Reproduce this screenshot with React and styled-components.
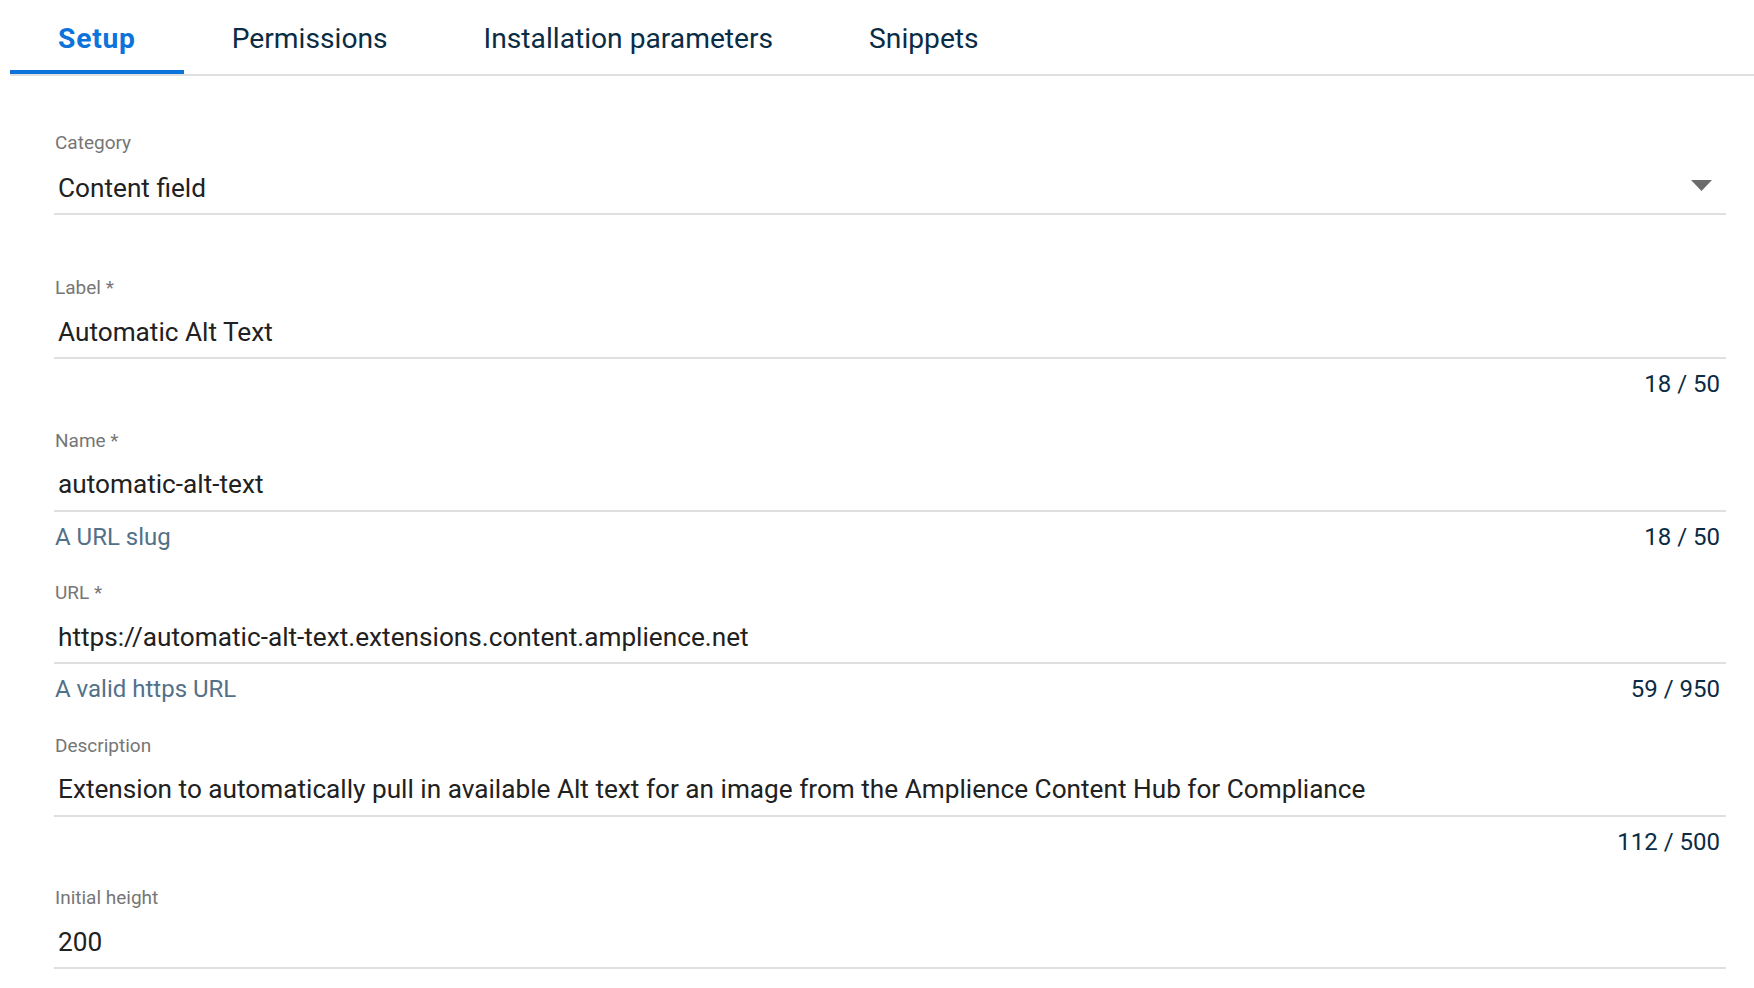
import React from 'react';
import styled, { createGlobalStyle } from 'styled-components';

const GlobalStyle = createGlobalStyle`
  html, body {
    margin: 0;
    padding: 0;
    background: #ffffff;
  }
  body {
    font-family: Roboto, 'Liberation Sans', sans-serif;
    -webkit-font-smoothing: antialiased;
  }
`;

const tabs = ['Setup', 'Permissions', 'Installation parameters', 'Snippets'];

const fields = [
  { label: 'Label *', value: 'Automatic Alt Text', count: '18 / 50' },
  { label: 'Name *', value: 'automatic-alt-text', hint: 'A URL slug', count: '18 / 50' },
  {
    label: 'URL *',
    value: 'https://automatic-alt-text.extensions.content.amplience.net',
    hint: 'A valid https URL',
    count: '59 / 950',
  },
  {
    label: 'Description',
    value:
      'Extension to automatically pull in available Alt text for an image from the Amplience Content Hub for Compliance',
    count: '112 / 500',
  },
  { label: 'Initial height', value: '200', last: true },
];

export default function App() {
  return (
    <Page>
      <GlobalStyle />
      <TabBar>
        {tabs.map((t, i) => (
          <Tab key={t} $active={i === 0}>
            {t}
          </Tab>
        ))}
      </TabBar>

      <Form>
        <SelectField>
          <Label>Category</Label>
          <SelectBox>
            <Value>Content field</Value>
            <Caret viewBox="0 0 21 11">
              <path d="M0 0 L21 0 L10.5 11 Z" fill="#6b6b6b" />
            </Caret>
          </SelectBox>
        </SelectField>

        {fields.map((f) => (
          <Field key={f.label} $last={f.last}>
            <Label>{f.label}</Label>
            <InputBox>
              <Value>{f.value}</Value>
            </InputBox>
            {!f.last && (
              <HelperRow>
                <Hint>{f.hint || ''}</Hint>
                <Counter>{f.count}</Counter>
              </HelperRow>
            )}
          </Field>
        ))}
      </Form>
    </Page>
  );
}

const Page = styled.div`
  width: 100%;
  min-height: 100vh;
  background: #fff;
`;

const TabBar = styled.div`
  display: flex;
  margin-left: 10px;
  border-bottom: 2px solid #e0e0e0;
`;

const Tab = styled.div`
  box-sizing: border-box;
  height: 74px;
  padding: 6px 48px 0;
  display: flex;
  align-items: center;
  font-size: 28.2px;
  font-weight: ${(p) => (p.$active ? 700 : 400)};
  letter-spacing: ${(p) => (p.$active ? '0.8px' : '0')};
  color: ${(p) => (p.$active ? '#0b73da' : '#0a2c45')};
  border-bottom: 4px solid ${(p) => (p.$active ? '#0b73da' : 'transparent')};
  white-space: nowrap;
`;

const Form = styled.div`
  padding: 55px 28px 0 54px;
`;

const SelectField = styled.div`
  margin-bottom: 61px;
`;

const Field = styled.div`
  margin-bottom: ${(p) => (p.$last ? '0' : '26.5px')};
`;

const Label = styled.div`
  font-size: 19px;
  line-height: 24px;
  color: #767676;
  padding-left: 1px;
`;

const InputBox = styled.div`
  margin-top: 6px;
  height: 51px;
  padding: 0 4px;
  display: flex;
  align-items: center;
  border-bottom: 2px solid #e0e0e0;
`;

const SelectBox = styled(InputBox)`
  margin-top: 7px;
  justify-content: space-between;
  padding-right: 14px;
`;

const Value = styled.span`
  font-size: 26.2px;
  color: #212121;
  white-space: nowrap;
`;

const Caret = styled.svg`
  width: 21px;
  height: 11px;
  margin-top: -4px;
`;

const HelperRow = styled.div`
  display: flex;
  justify-content: space-between;
  align-items: center;
  margin-top: 7px;
  height: 36px;
  padding: 0 6px 0 1px;
  font-size: 24px;
`;

const Hint = styled.span`
  color: #527189;
`;

const Counter = styled.span`
  color: #0a2c45;
`;
